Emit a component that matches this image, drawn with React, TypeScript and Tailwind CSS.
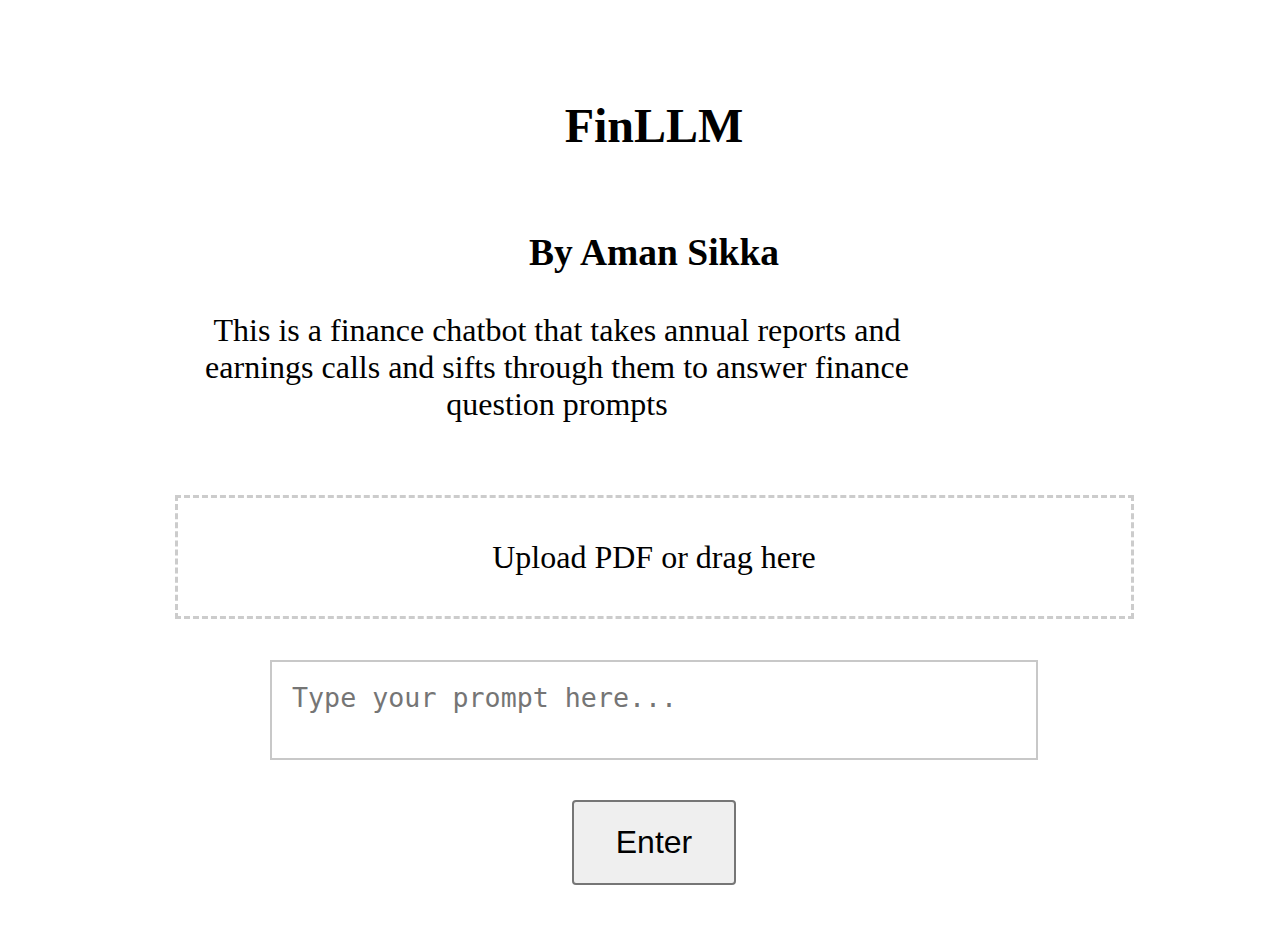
import { useState } from "react";

const App = () => {
  const [prompt, setPrompt] = useState("");

  return (
    <main className="min-h-screen bg-white pl-[30px] text-black font-['Liberation_Serif','Times_New_Roman',serif]">
      <h1 className="pt-[98px] text-center text-[48px] font-bold leading-[55px]">
        FinLLM
      </h1>
      <h2 className="mt-[78px] text-center text-[37.5px] font-bold leading-[43px]">
        By Aman Sikka
      </h2>
      <p className="mt-[38px] ml-[167px] w-[720px] text-center text-[32px] leading-[37px]">
        This is a finance chatbot that takes annual reports and earnings calls
        and sifts through them to answer finance question prompts
      </p>

      <div className="mx-auto mt-[72px] w-[959px] border-[3px] border-dashed border-[#cccccc] pt-[41px] pb-[40px] text-center text-[32px] leading-[37px]">
        Upload PDF or drag here
      </div>

      <div className="mt-[41px] flex justify-center">
        <textarea
          value={prompt}
          onChange={(e) => setPrompt(e.target.value)}
          placeholder="Type your prompt here..."
          className="h-[100px] w-[768px] resize-none border-2 border-[#c8c8c8] p-[20px] text-[26.67px] leading-[31px] font-['DejaVu_Sans_Mono',monospace] placeholder:text-[#757575] outline-none"
        />
      </div>

      <div className="mt-[40px] flex justify-center pb-[46px]">
        <button className="h-[85px] w-[164px] rounded-[4px] border-2 border-[#767676] bg-[#efefef] text-[32px] leading-[37px] font-['Liberation_Sans',Arial,sans-serif]">
          Enter
        </button>
      </div>
    </main>
  );
};

export default App;
